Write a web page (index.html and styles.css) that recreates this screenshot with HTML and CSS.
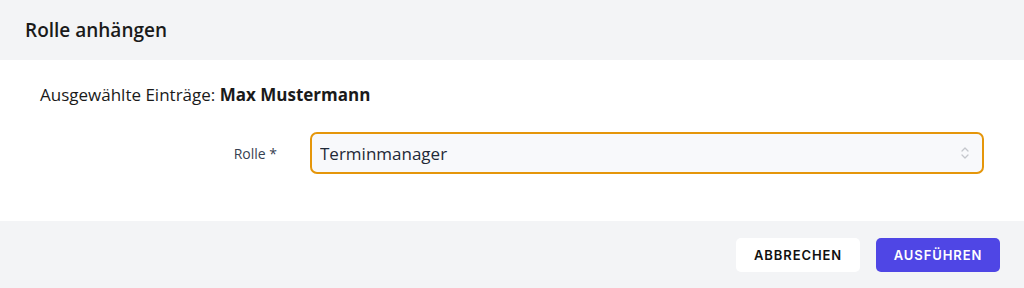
FILE: index.html
```html
<!DOCTYPE html>
<html lang="de">
<head>
    <meta charset="UTF-8">
    <meta name="viewport" content="width=device-width, initial-scale=1.0">
    <title>Rolle anhängen</title>
    <link rel="stylesheet" href="styles.css">
</head>
<body>
    <div class="modal">
        <div class="modal-header">
            <h2>Rolle anhängen</h2>
        </div>

        <div class="modal-body">
            <p class="selected">Ausgewählte Einträge: <strong>Max Mustermann</strong></p>

            <div class="form-row">
                <label class="form-label" for="role">Rolle *</label>
                <div class="select-wrap">
                    <select id="role" class="form-select">
                        <option>Terminmanager</option>
                    </select>
                    <svg class="select-arrows" width="10" height="16" viewBox="0 0 10 16">
                        <path d="M2 6 L5 3 L8 6" fill="none" stroke="#c4c7cc" stroke-width="1.3" stroke-linecap="round" stroke-linejoin="round"/>
                        <path d="M2 10 L5 13 L8 10" fill="none" stroke="#c4c7cc" stroke-width="1.3" stroke-linecap="round" stroke-linejoin="round"/>
                    </svg>
                </div>
            </div>
        </div>

        <div class="modal-footer">
            <button class="btn btn-cancel">Abbrechen</button>
            <button class="btn btn-primary">Ausführen</button>
        </div>
    </div>
</body>
</html>
```

FILE: styles.css
```css
:root {
    --grey: #f3f4f6;
    --text: #111;
    --accent: #e5960a;
    --primary: #4f46e5;
}

body {
    margin: 0;
    font-family: 'Open Sans', 'Noto Sans', sans-serif;
    color: var(--text);
    background: #fff;
}

.modal {
    width: 1024px;
    height: 288px;
    display: flex;
    flex-direction: column;
}

.modal-header {
    height: 60px;
    background: var(--grey);
    display: flex;
    align-items: center;
    padding: 0 25px;
    box-sizing: border-box;
}

.modal-header h2 {
    margin: 0;
    font-size: 19px;
    font-weight: 600;
    color: #1a1a1a;
}

.modal-body {
    height: 161px;
    padding: 23px 40px 0 40px;
    box-sizing: border-box;
}

.selected {
    margin: 0;
    font-size: 17px;
    line-height: 24px;
    color: #1a1a1a;
}

.selected strong {
    font-weight: 700;
}

.form-row {
    display: flex;
    align-items: center;
    margin-top: 25px;
}

.form-label {
    width: 270px;
    text-align: right;
    font-size: 14px;
    color: #374151;
    padding-right: 33px;
    box-sizing: border-box;
}

.select-wrap {
    position: relative;
    width: 674px;
}

.form-select {
    appearance: none;
    -webkit-appearance: none;
    width: 100%;
    height: 42px;
    border: 2px solid var(--accent);
    border-radius: 7px;
    background: #f8f9fb;
    font-family: inherit;
    font-size: 17px;
    color: #1f2937;
    padding: 0 8px;
    outline: none;
}

.select-arrows {
    position: absolute;
    right: 14px;
    top: 13px;
}

.modal-footer {
    flex: 1;
    background: var(--grey);
    display: flex;
    justify-content: flex-end;
    align-items: center;
    gap: 16px;
    padding: 0 24px;
}

.btn {
    width: 124px;
    height: 34px;
    border: none;
    border-radius: 5px;
    font-family: 'Inter', 'Noto Sans', sans-serif;
    font-size: 13px;
    font-weight: 600;
    letter-spacing: 0.9px;
    text-transform: uppercase;
    cursor: pointer;
}

.btn-cancel {
    background: #fff;
    color: #111;
}

.btn-primary {
    background: var(--primary);
    color: #fff;
}
```
